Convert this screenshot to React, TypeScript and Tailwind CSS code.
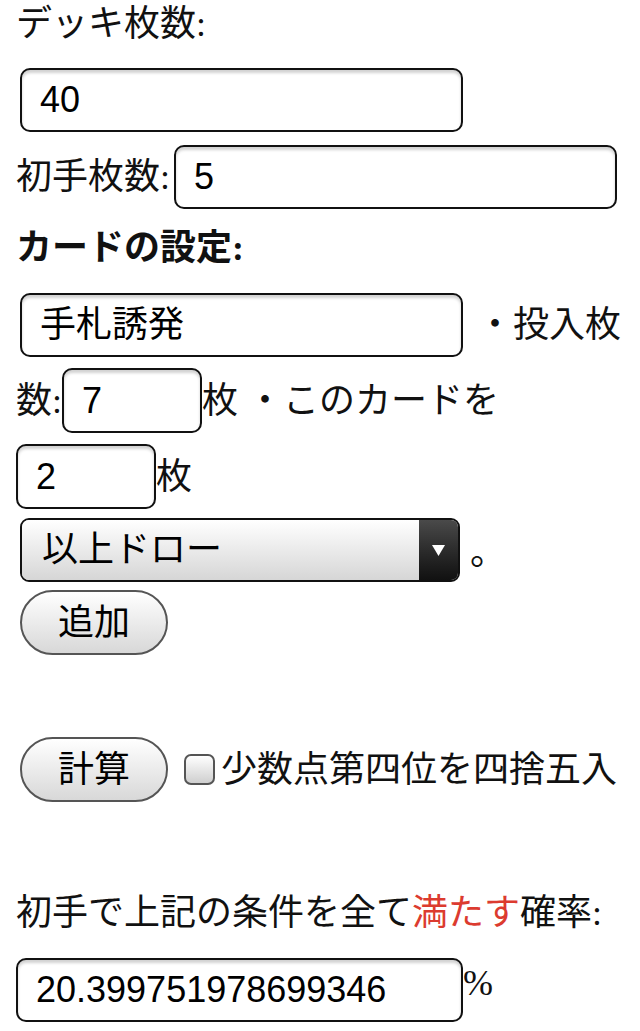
import React from "react";

const serif = "font-['Liberation_Serif','Noto_Sans_CJK_JP',serif]";
const sans = "font-['Liberation_Sans','Noto_Sans_CJK_JP',sans-serif]";

function Field({ value, className = "" }: { value: string; className?: string }) {
  return (
    <div
      className={`flex h-[64px] items-center rounded-[10px] border-2 border-[#111] bg-white pl-[18px] text-[36px] leading-none text-black shadow-[inset_0_3px_3px_rgba(0,0,0,0.18)] ${sans} ${className}`}
    >
      {value}
    </div>
  );
}

function PillButton({ label, className = "" }: { label: string; className?: string }) {
  return (
    <div
      className={`flex h-[65px] w-[148px] items-center justify-center rounded-full border-2 border-[#555] bg-gradient-to-b from-white to-[#d8d8d8] text-[36px] leading-none text-black ${sans} ${className}`}
    >
      {label}
    </div>
  );
}

export default function App() {
  return (
    <div className={`w-[640px] bg-white text-[36px] text-[#111] ${serif}`}>
      {/* deck size */}
      <div className="pl-[16px] leading-[48px]">デッキ枚数:</div>
      <div className="mt-[20px] pl-[20px]">
        <Field value="40" className="w-[443px]" />
      </div>

      {/* opening hand */}
      <div className="mt-[13px] flex items-center pl-[16px]">
        <span className="leading-[48px]">初手枚数:</span>
        <Field value="5" className="ml-[4px] w-[443px]" />
      </div>

      {/* card settings */}
      <div className="mt-[15px] pl-[16px] font-bold leading-[48px]">カードの設定:</div>

      <div className="mt-[21px] flex items-center pl-[20px]">
        <Field value="手札誘発" className="w-[443px]" />
        <span className="ml-[14px] whitespace-nowrap leading-[48px]">・投入枚</span>
      </div>

      <div className="mt-[11px] flex items-center pl-[16px]">
        <span className="leading-[48px]">数:</span>
        <Field value="7" className="h-[65px] w-[140px]" />
        <span className="whitespace-nowrap leading-[48px]">枚 ・このカードを</span>
      </div>

      <div className="mt-[11px] flex items-center pl-[16px]">
        <Field value="2" className="h-[65px] w-[140px]" />
        <span className="leading-[48px]">枚</span>
      </div>

      <div className="mt-[9px] flex items-center pl-[20px]">
        <div className="flex h-[64px] w-[440px] overflow-hidden rounded-[9px] border-2 border-[#111]">
          <div
            className={`flex flex-1 items-center bg-gradient-to-b from-white to-[#d6d6d6] pl-[20px] text-[36px] leading-none text-black ${sans}`}
          >
            以上ドロー
          </div>
          <div className="flex w-[39px] items-center justify-center bg-gradient-to-b from-[#4a4a4a] to-[#111]">
            <svg width="13" height="12" viewBox="0 0 13 12">
              <path d="M0 1h13L6.5 12z" fill="#fff" />
            </svg>
          </div>
        </div>
        <span className={`ml-[10px] pt-[6px] leading-[48px] ${sans}`}>。</span>
      </div>

      <div className="mt-[8px] pl-[20px]">
        <PillButton label="追加" className="w-[147px]" />
      </div>

      {/* calculate */}
      <div className="mt-[82px] flex items-center pl-[20px]">
        <PillButton label="計算" className="h-[64px]" />
        <div className="ml-[16px] h-[31px] w-[31px] rounded-[7px] border-2 border-[#555] bg-gradient-to-b from-white to-[#cfcfcf]" />
        <span className="ml-[6px] whitespace-nowrap leading-[48px]">少数点第四位を四捨五入</span>
      </div>

      {/* result */}
      <div className="mt-[87px] whitespace-nowrap pl-[16px] leading-[48px]">
        初手で上記の条件を全て<span className="text-[#dc3b2f]">満たす</span>確率:
      </div>
      <div className="mt-[21px] flex items-center pl-[16px]">
        <Field value="20.399751978699346" className="w-[447px]" />
        <span className="-mt-[14px] leading-[48px]">%</span>
      </div>
    </div>
  );
}
